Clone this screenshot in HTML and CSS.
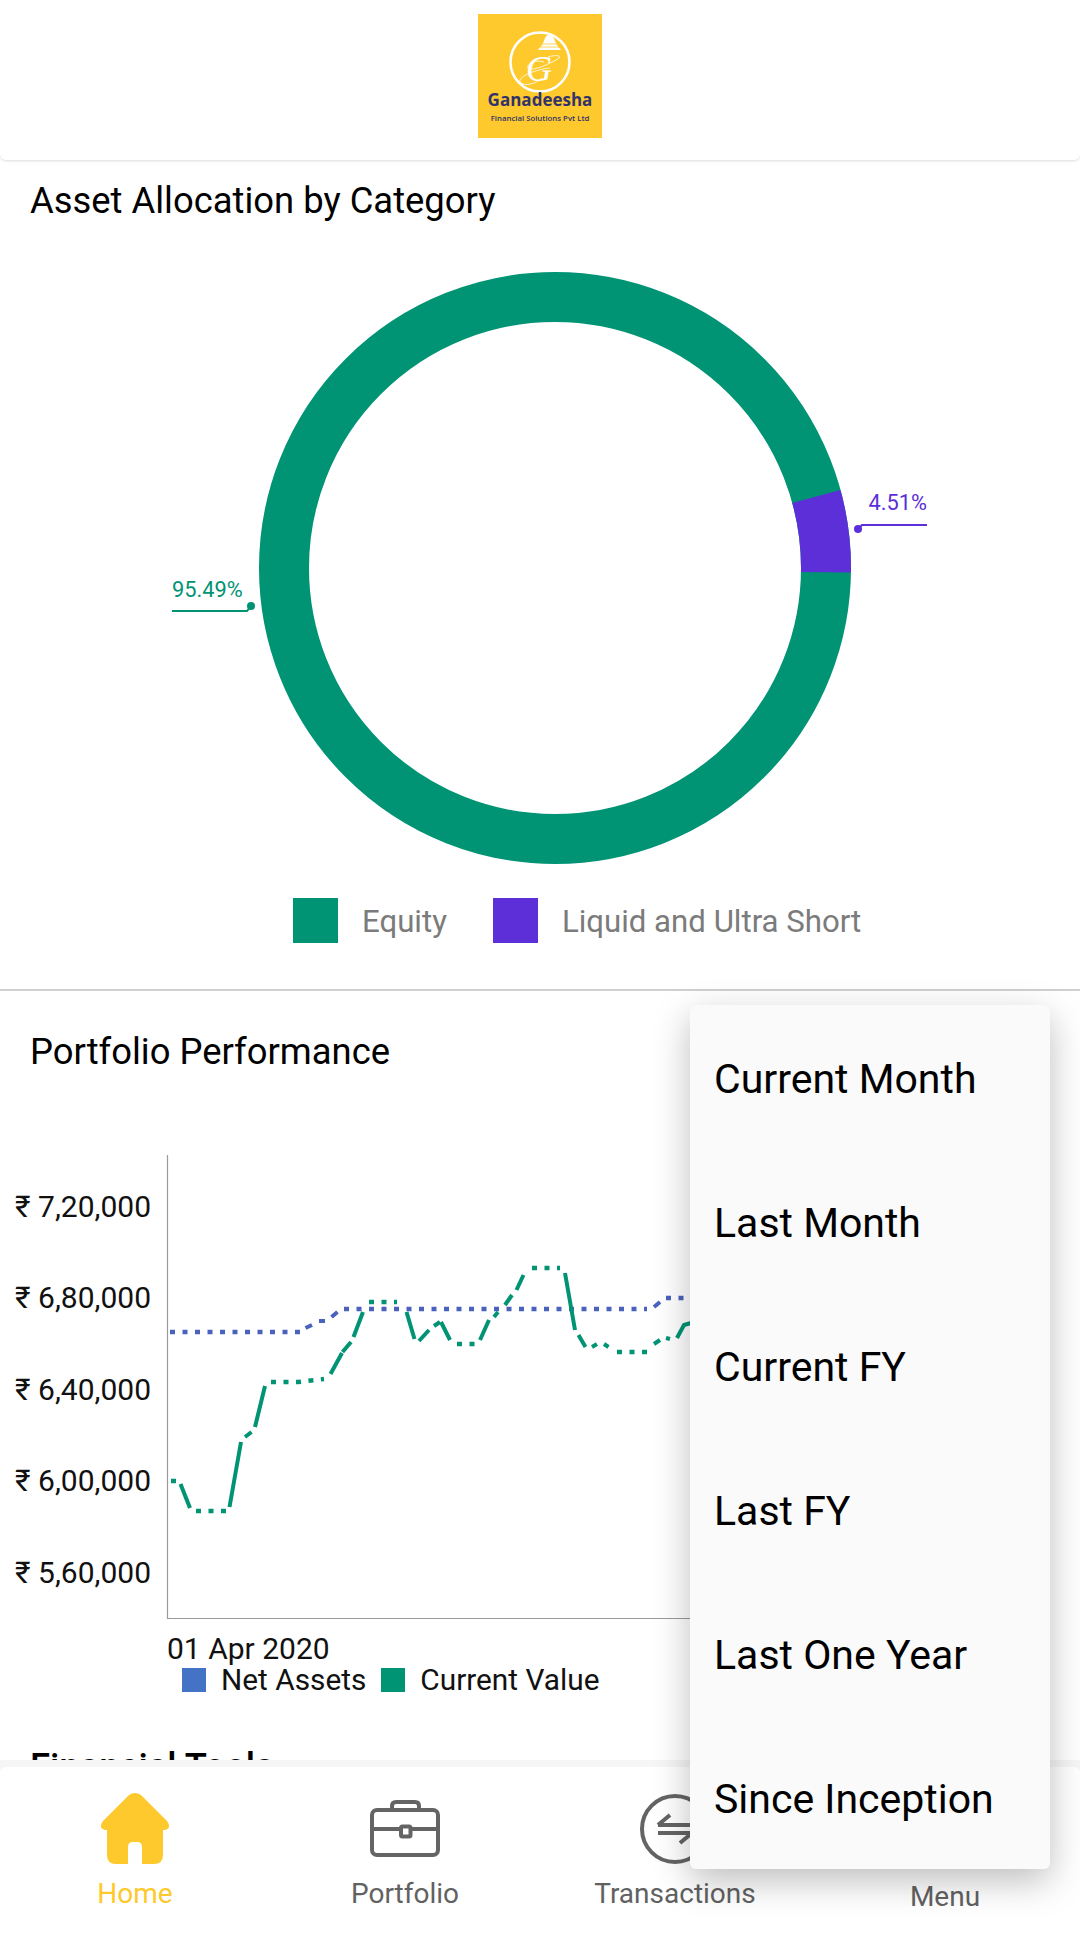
FILE: index.html
```html
<!DOCTYPE html>
<html lang="en">
<head>
    <meta charset="UTF-8">
    <meta name="viewport" content="width=device-width, initial-scale=1.0">
    <title>Ganadeesha Dashboard</title>
    <link rel="stylesheet" href="styles.css">
</head>
<body>
    <main class="content">
        <header class="top-bar">
            <svg class="logo" viewBox="0 0 124 124">
                <rect width="124" height="124" fill="#fdc92c"/>
                <circle cx="62" cy="48" r="29.5" fill="none" stroke="#fff" stroke-width="2.6"/>
                <path class="logo-bell" d="M71 21 C75 21 76 24 77 27 L79 31 L83 36 H60 L64 31 L66 27 C67 24 68 21 71 21 Z"/>
                <path class="logo-bell-lines" d="M64 30 H79 M62 33 H81"/>
                <path class="logo-swoosh" d="M66 48 C58 45 48 50 50 54 C54 58 72 50 81 44 C84 41 76 41 70 43 M42 68 C40 62 60 55 72 54 M42 68 C46 73 58 70 64 64"/>
                <text class="logo-g" x="61" y="67" text-anchor="middle">G</text>
                <text class="logo-name" x="62" y="92" text-anchor="middle">Ganadeesha</text>
                <text class="logo-sub" x="62" y="107" text-anchor="middle">Financial Solutions Pvt Ltd</text>
            </svg>
        </header>

        <section class="allocation">
            <h2 class="section-title">Asset Allocation by Category</h2>
            <svg class="donut" viewBox="0 250 1080 630">
                <circle cx="555" cy="568" r="271" fill="none" stroke="#009374" stroke-width="50"/>
                <path d="M840.5 489.9 A296 296 0 0 1 851 572.6 L801 571.9 A246 246 0 0 0 792.3 503.1 Z" fill="#5c2fd9"/>

                <circle cx="858" cy="529" r="4" fill="#5c2fd9"/>
                <path d="M858 529 L862 525 H927" fill="none" stroke="#5c2fd9" stroke-width="2"/>
                <text class="callout callout-purple" x="927" y="510" text-anchor="end">4.51%</text>

                <circle cx="251" cy="606" r="4" fill="#009374"/>
                <path d="M251 606 L247 611 H172" fill="none" stroke="#009374" stroke-width="2"/>
                <text class="callout callout-green" x="172" y="597">95.49%</text>
            </svg>
            <div class="donut-legend">
                <span class="donut-swatch swatch-equity"></span>
                <span class="donut-label">Equity</span>
                <span class="donut-swatch swatch-liquid"></span>
                <span class="donut-label">Liquid and Ultra Short</span>
            </div>
        </section>

        <section class="performance">
            <h2 class="section-title">Portfolio Performance</h2>
            <svg class="line-chart" viewBox="0 1140 1080 526">
                <path class="axis" d="M167.5 1155 V1618.5 H700"/>

                <text class="tick" x="151" y="1217" text-anchor="end">₹ 7,20,000</text>
                <text class="tick" x="151" y="1308" text-anchor="end">₹ 6,80,000</text>
                <text class="tick" x="151" y="1400" text-anchor="end">₹ 6,40,000</text>
                <text class="tick" x="151" y="1491" text-anchor="end">₹ 6,00,000</text>
                <text class="tick" x="151" y="1583" text-anchor="end">₹ 5,60,000</text>
                <text class="tick" x="167" y="1659">01 Apr 2020</text>

                <!-- net assets -->
                <path class="line dots blue" d="M170 1332 H300 M344 1309 H647 M666 1298 H685"/>
                <path class="line blue" d="M305.5 1328 L312 1325 M319 1321 H325 M331.5 1317 L337.5 1312 M654 1307 L660 1302"/>

                <!-- current value -->
                <path class="line dots green" d="M171 1481 H176 M196 1511 H226 M271 1382 H298 L324 1379 M369 1302 H397 M457 1344 H475 M532 1268 H560 M617 1352 L647 1352"/>
                <path class="line green" d="M180.5 1484 L190 1508 M229.5 1507 L241 1442 M245 1437 L251.5 1432 M255 1427 L265 1386 M330.5 1374 L342 1353 M342.5 1352 L351 1342 M353.5 1337 L363 1312 M406.5 1312 L414.5 1339 M419 1341 L429 1330 M434 1326 L440 1322 M441 1322 L450 1340 M480 1340 L489 1320 M494 1317 L498 1312 M505 1305 L512 1295 M516.5 1290 L523.5 1275 M565 1273 L575 1330 M578.5 1335 L585.5 1347 M592 1347 L597 1344 M604 1344 L608.5 1347 M654 1344 L660 1340 M666 1338 L670 1339 M677 1338 L684 1325 L691 1323"/>
            </svg>
            <div class="chart-legend">
                <span class="chart-swatch swatch-net"></span>
                <span>Net Assets</span>
                <span class="chart-swatch swatch-current"></span>
                <span>Current Value</span>
            </div>
            <h2 class="section-title tools-title">Financial Tools</h2>
        </section>
    </main>

    <div class="tab-strip">
        <nav class="tab-bar">
            <div class="tab tab-active">
                <div class="tab-icon">
                    <svg width="70" height="71" viewBox="0 0 70 71">
                        <path fill="#fdc92c" d="M29 2 Q35 -2 41 2 L67 28 Q72 35 65 37 L63 37 V62 Q63 71 54 71 H42 V54 Q42 49 37 49 H33 Q28 49 28 54 V71 H16 Q7 71 7 62 V37 L5 37 Q-2 35 3 28 Z"/>
                    </svg>
                </div>
                <span class="tab-label">Home</span>
            </div>
            <div class="tab">
                <div class="tab-icon">
                    <svg class="stroke-icon" width="70" height="57" viewBox="0 0 70 57">
                        <rect x="2" y="10" width="66" height="45" rx="5"/>
                        <path d="M22 10 V6 Q22 2 26 2 H45 Q49 2 49 6 V10"/>
                        <path d="M2 29 H30 M41 29 H68"/>
                        <rect x="31" y="26.5" width="9.5" height="10" rx="1.5"/>
                    </svg>
                </div>
                <span class="tab-label">Portfolio</span>
            </div>
            <div class="tab">
                <div class="tab-icon">
                    <svg class="stroke-icon" width="70" height="70" viewBox="0 0 70 70">
                        <circle cx="35" cy="35" r="33"/>
                        <path d="M18 31 H52 M18 31 L30 21 M18 39 H52 M52 39 L40 49"/>
                    </svg>
                </div>
                <span class="tab-label">Transactions</span>
            </div>
            <div class="tab">
                <div class="tab-icon"></div>
                <span class="tab-label tab-label-low">Menu</span>
            </div>
        </nav>
    </div>

    <ul class="period-menu">
        <li>Current Month</li>
        <li>Last Month</li>
        <li>Current FY</li>
        <li>Last FY</li>
        <li>Last One Year</li>
        <li>Since Inception</li>
    </ul>
</body>
</html>
```

FILE: styles.css
```css
* {
    box-sizing: border-box;
}
html, body {
    margin: 0;
    padding: 0;
}
body {
    font-family: Roboto, 'Liberation Sans', sans-serif;
    background: #fff;
    color: #000;
    width: 1080px;
    height: 1933px;
    display: flex;
    flex-direction: column;
    overflow: hidden;
    position: relative;
}
svg {
    display: block;
}
.content {
    flex: 1;
    min-height: 0;
    overflow: hidden;
}

/* header */
.top-bar {
    height: 160px;
    padding-top: 14px;
    display: flex;
    justify-content: center;
    border-radius: 0 0 6px 6px;
    box-shadow: 0 1px 3px rgba(0, 0, 0, 0.14);
}
.logo {
    width: 124px;
    height: 124px;
}
.logo-bell {
    fill: #fff;
}
.logo-bell-lines {
    fill: none;
    stroke: #fdc92c;
    stroke-width: 0.8;
}
.logo-swoosh {
    fill: none;
    stroke: #fff;
    stroke-width: 0.8;
}
.logo-g {
    font-family: 'Liberation Serif', serif;
    font-style: italic;
    font-size: 36px;
    fill: #fff;
}
.logo-name {
    font-family: 'Open Sans', sans-serif;
    font-weight: 700;
    font-size: 17px;
    fill: #33336b;
}
.logo-sub {
    font-family: 'Open Sans', sans-serif;
    font-weight: 600;
    font-size: 7.8px;
    fill: #33336b;
}

.section-title {
    margin: 0;
    padding-left: 30px;
    font-size: 36.4px;
    font-weight: 400;
    line-height: 40px;
}

/* donut */
.allocation {
    padding: 21px 0 46px;
    border-bottom: 2px solid #d0d0d0;
}
.donut {
    width: 1080px;
    height: 630px;
    margin-top: 29px;
}
.callout {
    font-size: 21.8px;
}
.callout-purple {
    fill: #5c2fd9;
}
.callout-green {
    fill: #009374;
}
.donut-legend {
    display: flex;
    align-items: center;
    height: 45px;
    margin-top: 18px;
    padding-left: 293px;
    font-size: 31.2px;
    color: #7b7b7b;
}
.donut-swatch {
    width: 45px;
    height: 45px;
    margin-right: 24px;
}
.donut-label {
    margin: 2px 46px 0 0;
}
.swatch-equity {
    background: #009374;
}
.swatch-liquid {
    background: #5c2fd9;
}

/* line chart */
.performance {
    padding-top: 41px;
}
.line-chart {
    width: 1080px;
    height: 526px;
    margin-top: 68px;
}
.axis {
    fill: none;
    stroke: #9a9a9a;
    stroke-width: 1.2;
}
.tick {
    font-size: 30px;
    fill: #111;
}
.line {
    fill: none;
    stroke-width: 4;
}
.dots {
    stroke-width: 4.5;
    stroke-dasharray: 5 7.5;
}
.blue {
    stroke: #4a62bb;
}
.green {
    stroke: #009374;
}
.chart-legend {
    display: flex;
    align-items: center;
    gap: 15px;
    height: 28px;
    padding-left: 182px;
    font-size: 29.8px;
    line-height: 28px;
    color: #111;
}
.chart-swatch {
    width: 24px;
    height: 24px;
}
.swatch-net {
    background: #4472c4;
}
.swatch-current {
    background: #009374;
}
.tools-title {
    margin-top: 53px;
    font-weight: 500;
}

/* bottom tabs */
.tab-strip {
    padding-top: 7px;
    background: #f6f6f6;
}
.tab-bar {
    display: flex;
    height: 166px;
    padding-top: 26px;
    background: #fff;
    border-radius: 6px 6px 0 0;
}
.tab {
    flex: 1;
    display: flex;
    flex-direction: column;
    align-items: center;
    color: #616161;
}
.tab-active {
    color: #fdc92c;
}
.tab-icon {
    height: 71px;
    display: flex;
    align-items: center;
}
.tab-label {
    margin-top: 13px;
    font-size: 28px;
    line-height: 34px;
}
.tab-label-low {
    margin-top: 16px;
}
.stroke-icon {
    fill: none;
    stroke: #646464;
    stroke-width: 4;
}

/* period dropdown */
.period-menu {
    position: absolute;
    left: 690px;
    top: 1005px;
    width: 360px;
    margin: 0;
    padding: 0;
    list-style: none;
    background: #fafafa;
    border-radius: 6px;
    box-shadow: 0 12px 36px rgba(0, 0, 0, 0.26);
}
.period-menu li {
    height: 144px;
    padding: 4px 0 0 24px;
    line-height: 140px;
    font-size: 41px;
}
```
